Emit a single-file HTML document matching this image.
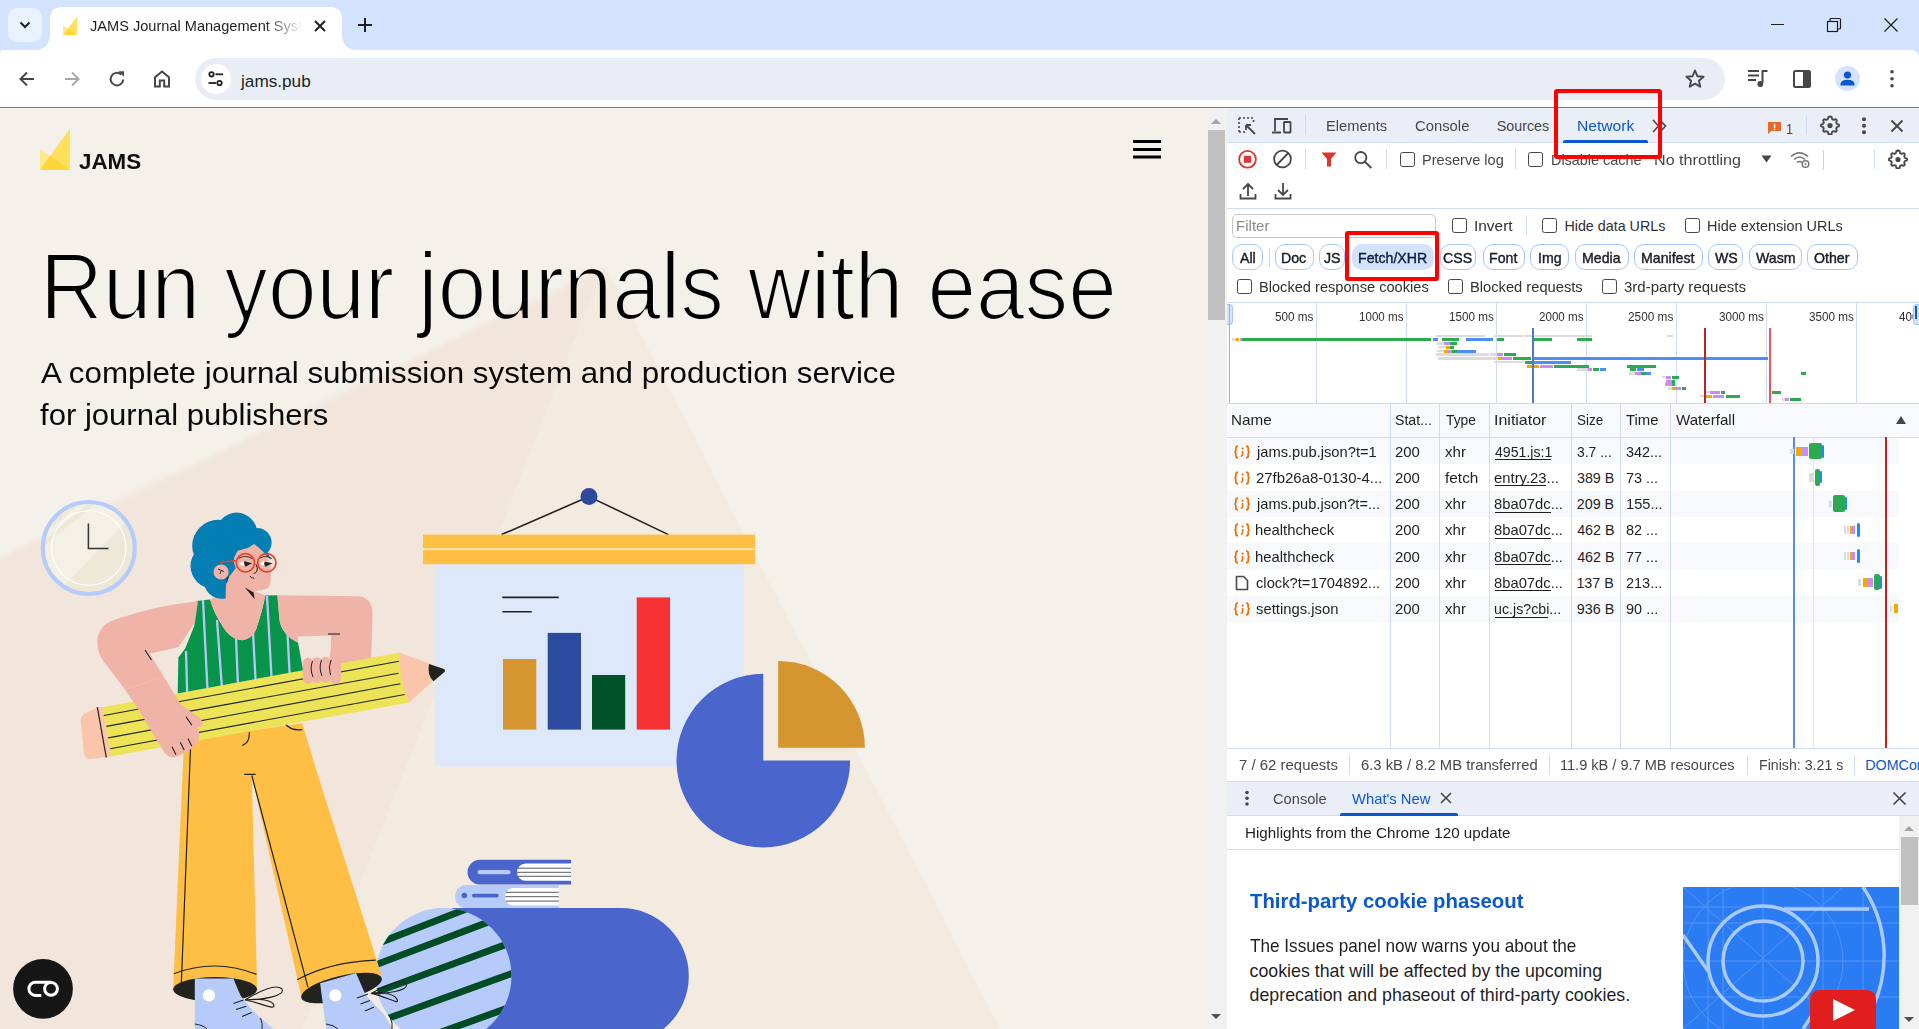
<!DOCTYPE html>
<html><head><meta charset="utf-8">
<style>
*{box-sizing:border-box;margin:0;padding:0}
html,body{width:1919px;height:1029px;overflow:hidden;background:#fff;font-family:"Liberation Sans",sans-serif}
.a{position:absolute}
svg{display:block}
#strip{left:0;top:0;width:1919px;height:60px;background:#D3E3FD}
#toolbar{left:0;top:50px;width:1919px;height:57px;background:#fff;border-top-right-radius:8px}
#tbline{left:0;top:107px;width:1919px;height:1px;background:#7d7d7d}
.tabtxt{font-size:15px;color:#1f1f1f;white-space:nowrap}
#page{left:0;top:108px;width:1206px;height:921px;background:#F4F0EA;overflow:hidden}
#pscroll{left:1206px;top:108px;width:21px;height:921px;background:#F1F1F1}
#dt{left:1227px;top:108px;width:692px;height:921px;background:#fff;overflow:hidden}
.dtt{font-size:15px;color:#474747;white-space:nowrap}
.t15{font-size:15px;color:#1f1f1f;white-space:nowrap}
.redbox{position:absolute;border:4px solid #FF0000;border-radius:3px}
</style></head><body>
<!-- tab strip -->
<div id="strip" class="a"></div>
<div class="a" style="left:8px;top:8px;width:34px;height:34px;border-radius:9px;background:#E9F1FE"></div>
<svg class="a" style="left:17px;top:17px" width="16" height="16" viewBox="0 0 16 16"><path d="M3.5 5.5 L8 10 L12.5 5.5" fill="none" stroke="#1f1f1f" stroke-width="2"/></svg>
<!-- active tab -->
<svg class="a" style="left:34px;top:7px" width="324" height="44" viewBox="0 0 324 44">
<path d="M0 43 Q16 43 16 27 V12 Q16 0 28 0 H296 Q308 0 308 12 V27 Q308 43 324 43 Z" fill="#fff"/>
</svg>
<svg class="a" style="left:62px;top:16px" width="16" height="20" viewBox="0 0 16 20">
<polygon points="1,19 15,0.5 15,19" fill="#FFE05A"/><polygon points="1,9.5 6.2,12.6 1,19" fill="#FFE98A"/><polygon points="6.2,12.6 15,19 1,19" fill="#FFD43A"/>
</svg>

<svg class="a" style="left:312px;top:18px" width="16" height="16" viewBox="0 0 16 16"><path d="M3 3 L13 13 M13 3 L3 13" stroke="#1f1f1f" stroke-width="2"/></svg>
<svg class="a" style="left:356px;top:16px" width="18" height="18" viewBox="0 0 18 18"><path d="M9 2 V16 M2 9 H16" stroke="#1f1f1f" stroke-width="2"/></svg>
<!-- window controls -->
<div class="a" style="left:1771px;top:24px;width:13px;height:1px;background:#1f1f1f"></div>
<svg class="a" style="left:1826px;top:17px" width="16" height="16" viewBox="0 0 16 16"><rect x="1.5" y="4.5" width="10" height="10" fill="none" stroke="#1f1f1f" stroke-width="1.2"/><path d="M4 4.5 V2.5 Q4 1.5 5 1.5 H13.5 Q14.5 1.5 14.5 2.5 V11 Q14.5 12 13.5 12 H11.5" fill="none" stroke="#1f1f1f" stroke-width="1.2"/></svg>
<svg class="a" style="left:1883px;top:17px" width="16" height="16" viewBox="0 0 16 16"><path d="M1.5 1.5 L14.5 14.5 M14.5 1.5 L1.5 14.5" stroke="#1f1f1f" stroke-width="1.2"/></svg>
<!-- toolbar -->
<div id="toolbar" class="a"></div>
<svg class="a" style="left:0;top:43px" width="10" height="10" viewBox="0 0 10 10"><path d="M0 0 V10 Q0 7 3 7 H10 V0 Z" fill="#D3E3FD"/></svg>
<svg class="a" style="left:17px;top:69px" width="20" height="20" viewBox="0 0 20 20"><path d="M17 10 H4 M10 3.5 L3.5 10 L10 16.5" fill="none" stroke="#474747" stroke-width="2"/></svg>
<svg class="a" style="left:62px;top:69px" width="20" height="20" viewBox="0 0 20 20"><path d="M3 10 H16 M10 3.5 L16.5 10 L10 16.5" fill="none" stroke="#A8A8A8" stroke-width="2"/></svg>
<svg class="a" style="left:107px;top:69px" width="20" height="20" viewBox="0 0 20 20"><path d="M16.2 10.5 A6.3 6.3 0 1 1 14.3 5.6" fill="none" stroke="#474747" stroke-width="2"/><path d="M11.5 2.2 H17 V7.7 Z" fill="#474747"/></svg>
<svg class="a" style="left:152px;top:69px" width="20" height="20" viewBox="0 0 20 20"><path d="M3 17.5 V8.3 L10 2.5 L17 8.3 V17.5 H12.2 V11.5 H7.8 V17.5 Z" fill="none" stroke="#474747" stroke-width="2" stroke-linejoin="miter"/></svg>
<div class="a" style="left:195px;top:58px;width:1530px;height:42px;border-radius:21px;background:#E9EEF6"></div>
<div class="a" style="left:200.5px;top:63.5px;width:30px;height:30px;border-radius:15px;background:#fff"></div>
<svg class="a" style="left:207px;top:70px" width="18" height="18" viewBox="0 0 18 18"><circle cx="4.5" cy="4.3" r="2.2" fill="none" stroke="#1f1f1f" stroke-width="1.8"/><path d="M8.5 4.3 H16" stroke="#1f1f1f" stroke-width="1.8"/><circle cx="12.5" cy="13" r="2.2" fill="none" stroke="#1f1f1f" stroke-width="1.8"/><path d="M1.5 13 H9" stroke="#1f1f1f" stroke-width="1.8"/></svg>
<div class="a" style="left:241px;top:70.5px;font-size:17.2px;color:#1f1f1f;white-space:nowrap">jams.pub</div>
<svg class="a" style="left:1684px;top:68px" width="22" height="22" viewBox="0 0 22 22"><path d="M11 2.5 L13.4 8.2 L19.6 8.7 L14.9 12.8 L16.3 18.8 L11 15.6 L5.7 18.8 L7.1 12.8 L2.4 8.7 L8.6 8.2 Z" fill="none" stroke="#474747" stroke-width="1.9" stroke-linejoin="round"/></svg>
<svg class="a" style="left:1747px;top:69px" width="22" height="20" viewBox="0 0 22 20"><path d="M1 2 H12 M1 6.5 H12 M1 11 H9" stroke="#474747" stroke-width="2"/><path d="M15.5 14 V2 H20.5" fill="none" stroke="#474747" stroke-width="2"/><circle cx="13.3" cy="15" r="2.9" fill="#474747"/></svg>
<svg class="a" style="left:1792px;top:69px" width="20" height="20" viewBox="0 0 20 20"><rect x="2" y="2" width="16" height="16" rx="1.5" fill="none" stroke="#474747" stroke-width="2"/><rect x="11" y="2" width="7" height="16" fill="#474747"/></svg>
<div class="a" style="left:1835px;top:66px;width:25px;height:25px;border-radius:13px;background:#D3E3FD"></div>
<svg class="a" style="left:1837px;top:68px" width="21" height="21" viewBox="0 0 21 21"><circle cx="10.5" cy="7" r="3.6" fill="#0B57D0"/><path d="M3.5 16.5 Q3.5 11.8 10.5 11.8 Q17.5 11.8 17.5 16.5 V17.5 H3.5 Z" fill="#0B57D0"/></svg>
<svg class="a" style="left:1886px;top:69px" width="12" height="20" viewBox="0 0 12 20"><circle cx="6" cy="2.7" r="1.8" fill="#474747"/><circle cx="6" cy="9.7" r="1.8" fill="#474747"/><circle cx="6" cy="16.8" r="1.8" fill="#474747"/></svg>
<div id="tbline" class="a"></div>

<!-- PAGE -->
<div id="page" class="a"><svg class="a" style="left:0;top:0" width="1206" height="921" viewBox="0 108 1206 921">
<!-- background triangles -->
<defs><filter id="soft" x="-10%" y="-10%" width="120%" height="120%"><feGaussianBlur stdDeviation="2"/></filter></defs><polygon points="605,267 0,557 -30,571 -30,1060 298,1060" fill="#F2E6DC" filter="url(#soft)"/>
<polygon points="605,265 298,1040 1006,1040" fill="#F3EBE0"/>
<!-- logo -->
<polygon points="39.9,169.9 70,128.4 70,169.9" fill="#FFE05A"/>
<polygon points="39.9,149.2 50,155.8 39.9,169.9" fill="#FFE98A"/>
<polygon points="50,155.8 70,169.9 39.9,169.9" fill="#FFD53C"/>
<!-- hamburger -->
<rect x="1133" y="140" width="28" height="3" fill="#000"/>
<rect x="1133" y="148" width="28" height="3" fill="#000"/>
<rect x="1133" y="155.5" width="28" height="3" fill="#000"/>

<!-- clock -->
<defs><clipPath id="clockclip"><circle cx="88.8" cy="548" r="46"/></clipPath></defs>
<circle cx="88.8" cy="548" r="46" fill="#EDE8D8"/>
<g clip-path="url(#clockclip)"><polygon points="30,558 107,494 137,510 60,590" fill="#F3F0E5"/><polygon points="30,545 100,487 104,490 30,552" fill="#F3F0E5"/></g>
<circle cx="88.8" cy="548" r="46" fill="none" stroke="#B5CBFA" stroke-width="4"/>
<circle cx="88.8" cy="548" r="37.2" fill="none" stroke="#fff" stroke-width="1.1"/>
<path d="M88.4 523.5 V548.4 H108.5" fill="none" stroke="#333" stroke-width="1.5"/>
<!-- presentation board -->
<path d="M589 496.6 L501.6 534.6 M589 496.6 L668.4 534.6" stroke="#222" stroke-width="1.6"/>
<circle cx="589" cy="496.6" r="8.5" fill="#2E4A9E"/>
<rect x="434.7" y="564.2" width="309.3" height="202.3" fill="#DEE8FB"/>
<rect x="422.9" y="534.6" width="332.3" height="29.6" fill="#FFBF45"/>
<rect x="422.9" y="548.5" width="332.3" height="1.2" fill="#fff"/>
<path d="M502.3 597.4 H558.8 M502.3 611.8 H531.8" stroke="#222" stroke-width="1.6"/>
<rect x="503" y="659" width="33.3" height="70.6" fill="#D6962F"/>
<rect x="547.7" y="632.9" width="33.3" height="96.7" fill="#2D4B9E"/>
<rect x="592" y="675" width="33.2" height="54.6" fill="#005228"/>
<rect x="636.7" y="597.4" width="33.3" height="132.2" fill="#F73232"/>
<!-- pie -->
<path d="M763.3 760.6 V673.8 A86.8 86.8 0 1 0 850.1 760.6 Z" fill="#4A65CC"/>
<path d="M778.1 747.7 V660.9 A86.8 86.8 0 0 1 864.9 747.7 Z" fill="#D6962F"/>

<!-- books & ball -->
<path d="M452 908 H620.8 A68 68 0 0 1 620.8 1044 H452 Z" fill="#4A65CC"/>
<defs><clipPath id="ballclip"><circle cx="443.5" cy="976" r="68"/></clipPath></defs>
<circle cx="443.5" cy="976" r="68" fill="#B6CBF9"/>
<g clip-path="url(#ballclip)" stroke="#004D25" stroke-width="6.9">
<path d="M360 950.3 L530 884.2"/><path d="M360 970.8 L530 906.2"/><path d="M360 998.1 L530 935.7"/><path d="M360 1028.6 L530 966.8"/><path d="M360 1061.3 L530 1000"/>
</g>
<path d="M467.5 872.2 A12.4 12.4 0 0 1 479.9 859.8 H571 V884.5 H479.9 A12.4 12.4 0 0 1 467.5 872.2 Z" fill="#4A65CC"/>
<path d="M517 872.2 A8.6 8.6 0 0 1 525.6 863.6 H571 V880.8 H525.6 A8.6 8.6 0 0 1 517 872.2 Z" fill="#fff"/>
<path d="M517.5 868.2 H571 M517 872.3 H571 M517.5 876.3 H571" stroke="#4a4a4a" stroke-width="0.9"/>
<rect x="477.6" y="870" width="33" height="4.3" rx="2.1" fill="#B6CBF9"/>
<path d="M455 896.5 A11.5 11.5 0 0 1 466.5 885 H558.7 V908 H466.5 A11.5 11.5 0 0 1 455 896.5 Z" fill="#B6CBF9"/>
<path d="M505 896.5 A8.5 8.5 0 0 1 513.5 888 H558.7 V905.5 H513.5 A8.5 8.5 0 0 1 505 896.5 Z" fill="#fff"/>
<path d="M506 892.3 H558.7 M505.3 896.7 H558.7 M506 901.1 H558.7" stroke="#4a4a4a" stroke-width="0.9"/>
<circle cx="464.3" cy="895.5" r="2.8" fill="#4A65CC"/>
<rect x="472" y="893.8" width="26.7" height="3.7" rx="1.8" fill="#4A65CC"/>

<!-- PERSON -->
<!-- legs -->
<path d="M184 740 L302.2 723.2 L320 782 L381.8 976 L301.2 996 L251.8 776 L257.1 987 L173.1 989.3 Z" fill="#FFBF45"/>
<ellipse cx="215.1" cy="989.3" rx="42" ry="12.2" fill="#22221E"/>
<ellipse cx="341.5" cy="988" rx="41.5" ry="12.2" fill="#22221E" transform="rotate(-13.5 341.5 988)"/>
<path d="M173.8 973.7 Q215.1 958 256.5 974.4 M297.1 979.8 Q330 962 375.7 960.2" fill="none" stroke="#222" stroke-width="1.2"/>
<path d="M190.5 748.7 L181.4 982 M251.8 775.5 L308 987.3 M244.2 774.3 H255.6 M249.3 732.1 Q250 743 242.2 745.5 M285.6 724.5 Q292 731 302.2 729.6" fill="none" stroke="#222" stroke-width="1.2"/>
<!-- shoes -->
<path d="M194.8 978.5 H233.4 Q238 990 240.9 996 L253.1 1011 L273.4 1029 H194.8 Z" fill="#B6CBF9"/>
<path d="M320.1 983.2 L356 973 L365.5 994.7 L384.5 1015 L392.6 1029 H326.2 Z" fill="#B6CBF9"/>
<circle cx="209" cy="995.4" r="6.1" fill="#fff"/>
<circle cx="335.3" cy="995.4" r="6.1" fill="#fff"/>
<path d="M245 1000 C258 992 276 983 282 989 C286 996 262 1000 245 1000 C258 1002 274 1010 274 1006 C274 1000 258 998 245 1000 M233.4 1003.5 L243.6 1000 M236 1009.6 L246.3 1006.3 M242 1016.4 L251.7 1012.4" fill="none" stroke="#222" stroke-width="1.1"/>
<path d="M371 993.4 C385 986 402 978 406.2 984 C409 991 386 994 371 993.4 C384 996 398 1004 397.4 1001 C397 995 384 991 371 993.4 M357 998 L368 994 M360.5 1004 L370 1000.5 M365 1011 L374 1007" fill="none" stroke="#222" stroke-width="1.1"/>
<path d="M194.8 1024 Q203 1025 207 1029 M260.5 1018 Q263 1024 262 1029 M326 1024 Q334 1025 338 1029 M390 1017 Q393 1023 392 1029" fill="none" stroke="#222" stroke-width="1"/>
<!-- torso green -->
<path d="M196.5 600.9 L210.1 599.4 Q214 613 221.5 624.3 Q230 640 242.6 640.2 Q255 638 257.7 624.3 Q262 612 265.3 595.6 L277.4 595.3 L279.5 620 C281 630 288 638 298 642.5 L303 669.6 L305 705 L177 728 L177.7 692.3 L178.4 657.5 L185.2 648.5 L194.3 625.8 Z" fill="#08944B"/>
<g stroke="#B3C8F7" stroke-width="2.3">
<path d="M203 600 L209 720"/><path d="M186 651 L188 725"/><path d="M217 620 L224 716"/><path d="M236 637 L239 712"/><path d="M253 632 L257 708"/><path d="M267 596 L273 704"/><path d="M287 624 L291 700"/>
</g>
<!-- neck/chest skin -->
<path d="M210.1 599.4 Q214 613 221.5 624.3 Q230 640 242.6 640.2 Q255 638 257.7 624.3 Q262 612 265.3 595.6 L254 591 L226 592 Z" fill="#EFB3A8"/>
<!-- right arm -->
<path d="M277.4 595.3 L359 596.3 C368 597 372.6 604 372.6 614 L371.1 657.5 L369 690 L330 690 L331 635.6 L298 636.4 L298 642.5 C288 638 281 630 279.5 620 L277.4 595.3 Z" fill="#EFB3A8"/>
<path d="M328 634 H340" stroke="#222" stroke-width="1.1"/>
<!-- head -->
<g fill="#047EB3"><circle cx="218.2" cy="545.8" r="26"/><circle cx="236.6" cy="533.2" r="20.6"/><circle cx="257" cy="542.5" r="14.6"/><circle cx="213" cy="566" r="22.5"/><circle cx="222" cy="580.5" r="18.3"/><path d="M222 598.8 L240 580 L262 552 L271 560 L262 540 L235 520 Z"/></g>
<path d="M237.6 550.7 L248.3 547.8 L254.1 543.9 C258 547 262 550 263.9 552.6 C267 557 269.5 561 270.7 565.3 L270.7 580.8 C270 586 268 588.6 266.8 588.6 C263 590.5 260 590.5 258 590.5 L254 592 L256 600 L225.5 600 L226 584.7 L228.9 576.9 L232.8 572 L235.7 568.2 L233.7 561.4 L234.2 557.5 Z" fill="#EFB3A8"/>
<circle cx="221.1" cy="572" r="7.6" fill="#EFB3A8"/>
<path d="M218 569 L224 571.5 M221 571 L220 574" stroke="#222" stroke-width="0.9"/>
<path d="M227 578 L229 576 L226.5 584 Z" fill="#222"/>
<path d="M244.9 587.6 L253.7 592.5 L254.6 599.3 Z" fill="#22221E"/>
<path d="M239 563.8 Q245 558.5 252 563.3 Q245 568 239 563.8 Z M259.5 563.8 Q265.5 558.5 272 563.3 Q265.5 568 259.5 563.8 Z" fill="#fff"/>
<path d="M244.4 560.9 L252.2 563.3 L245.4 566.7 Q243.5 563.8 244.4 560.9 Z M264.8 561.4 L272.6 563.3 L265.3 566.7 Q263.5 564 264.8 561.4 Z" fill="#22221E"/>
<path d="M238.6 558.3 Q245.4 554.5 252.2 558.6 M259.5 558.3 Q265.8 554.5 272 558.6" fill="none" stroke="#222" stroke-width="0.9"/>
<path d="M256 564.3 Q258 568 257 571 Q256 573 253.7 573.5 M249.8 576 Q251.5 578.2 254.1 578.4" fill="none" stroke="#222" stroke-width="1"/>
<circle cx="245.4" cy="562.8" r="9.1" fill="none" stroke="#E8412C" stroke-width="1.7"/>
<circle cx="266.8" cy="562.8" r="9.1" fill="none" stroke="#E8412C" stroke-width="1.7"/>
<path d="M220.1 562.3 L236.3 560.4" stroke="#E8412C" stroke-width="1.5"/>
<!-- pencil -->
<path d="M102.4 707.2 L399.8 652.4 L409.1 702.4 L110.7 756.4 Z" fill="#EDE357"/>
<path d="M97.3 707.2 L102.4 707.2 L110.7 756.4 L91.6 759 C86 760 84 755 83.5 750 L80.7 721 C80 716 84 713 88 712 Z" fill="#FAC5AA"/>
<path d="M97.3 707.2 L106.3 757.7" stroke="#222" stroke-width="1.2"/>
<path d="M103.7 715.5 L399 661.3 M106.3 726.4 L398.5 673.2 M108.2 737.9 L400.3 683.8 M110.1 748.7 L404.7 694.5" stroke="#222" stroke-width="1.1"/>
<path d="M399.8 652.4 L445.4 669.7 L409.1 702.4 Q399 680 399.8 652.4 Z" fill="#FAC5AA"/>
<path d="M429 663.9 L444 669 Q446 670.5 444.5 672 L433.5 681.2 Q427 675 429 663.9 Z" fill="#22221E"/>
<!-- left arm -->
<path d="M196.5 601.6 C175 604 150 608 120 618 C105 622 96 630 97.6 645 C98 652 100 656 104 662 L124.8 689.3 L139.9 712 L164.4 752.6 C168 758 175 759 180 755 L189.9 750 L198.2 741 C200 736 199 730 197.6 727 C199 727 203 727 202.7 723.8 C202 719 198 716 196.3 715.5 L180.7 704.4 L171.6 689.3 L149.7 653.8 L178.4 647 L186 636 L195 622 L198 601.6 Z" fill="#EFB3A8"/>
<path d="M145 650 L151.5 660" stroke="#222" stroke-width="1.1"/>
<path d="M124 690 L160 678" stroke="#F6CFC6" stroke-width="0.6" opacity="0.7"/>
<!-- right hand fingers -->
<rect x="302.8" y="657.7" width="10.2" height="26" rx="5.1" fill="#EFB3A8"/>
<rect x="311.7" y="657.2" width="10.2" height="26" rx="5.1" fill="#EFB3A8"/>
<rect x="320.6" y="656.8" width="10" height="26" rx="5" fill="#EFB3A8"/>
<rect x="329.9" y="650" width="11.1" height="34" rx="5.5" fill="#EFB3A8"/>
<path d="M312.5 661 Q309.5 669 313 677 M321.5 660 Q318.5 668 322 676 M331 660 Q328 667 330.5 675" fill="none" stroke="#222" stroke-width="1"/>
<!-- left hand finger lines -->
<path d="M186 716.8 L191.8 725.1 M188 738.5 L191.8 746.2 M180.3 742.3 L184.2 750 M172 746.8 L175.9 754.5" stroke="#222" stroke-width="1.1"/>

<!-- chat button -->
<circle cx="43" cy="988.8" r="29.9" fill="#161616"/>
<path d="M41.3 995.4 H35.5 A6.6 6.6 0 0 1 35.5 982.2 H51" fill="none" stroke="#fff" stroke-width="3"/>
<circle cx="51" cy="988.8" r="6.4" fill="none" stroke="#fff" stroke-width="3"/>
</svg>
</div>
<div id="pscroll" class="a"></div>
<svg class="a" style="left:1210px;top:117px" width="12" height="8" viewBox="0 0 12 8"><path d="M1 7 L6 2 L11 7 Z" fill="#A3A3A3"/></svg>
<div class="a" style="left:1208px;top:130px;width:17px;height:190px;background:#C1C1C1"></div>
<svg class="a" style="left:1210px;top:1013px" width="12" height="8" viewBox="0 0 12 8"><path d="M1 1 L6 6 L11 1 Z" fill="#505050"/></svg>

<!-- DEVTOOLS -->
<div id="dt" class="a"></div>
<div class="a" style="left:90.08px;top:18.10px;font-size:15px;line-height:15px;color:#1f1f1f;white-space:nowrap;transform:scaleX(0.9715);transform-origin:0 0;width:219.2px;overflow:hidden;padding-bottom:6px;-webkit-mask-image:linear-gradient(90deg,#000 82%,transparent 100%);">JAMS Journal Management System</div>
<div class="a" style="left:78.66px;top:151.28px;font-size:22px;line-height:22px;color:#111;white-space:nowrap;font-weight:bold;transform:scaleX(1.0175);transform-origin:0 0;">JAMS</div>
<svg width="0" height="0" style="position:absolute"><filter id="thin" x="-5%" y="-5%" width="110%" height="110%"><feMorphology operator="erode" radius="1.2"/></filter></svg><div class="a" style="left:40.30px;top:240.43px;font-size:94px;line-height:94px;color:#000;white-space:nowrap;transform:scaleX(0.9282);transform-origin:0 0;filter:url(#thin);">Run your journals with ease</div>
<div class="a" style="left:40.62px;top:358.00px;font-size:29.3px;line-height:29.3px;color:#0a0a0a;white-space:nowrap;transform:scaleX(1.0693);transform-origin:0 0;">A complete journal submission system and production service</div>
<div class="a" style="left:40.23px;top:399.90px;font-size:29.3px;line-height:29.3px;color:#0a0a0a;white-space:nowrap;transform:scaleX(1.0602);transform-origin:0 0;">for journal publishers</div>
<div class="a" style="left:1227px;top:108px;width:692px;height:34px;background:#EAEEF6;"></div>
<div class="a" style="left:1227px;top:142px;width:692px;height:1px;background:#CFDCF3;"></div>
<svg class="a" style="left:1237px;top:116px" width="20" height="20" viewBox="0 0 20 20"><path d="M2 2h2M6 2h2M10 2h2M14 2h2M2 2v2M2 6v2M2 10v2M2 14v2M2 16h2M6 16h2" stroke="#474747" stroke-width="1.6"/><path d="M16.5 4v2" stroke="#474747" stroke-width="1.6"/><path d="M9 9 L18 18 M9 9 H14 M9 9 V14" fill="none" stroke="#474747" stroke-width="1.8"/></svg><svg class="a" style="left:1271px;top:116px" width="22" height="20" viewBox="0 0 22 20"><path d="M4 15 V3 H17" fill="none" stroke="#474747" stroke-width="1.8"/><path d="M1 16.5 H10" stroke="#474747" stroke-width="2"/><rect x="13" y="6" width="6.5" height="10.5" rx="0.5" fill="none" stroke="#474747" stroke-width="1.8"/></svg><div class="a" style="left:1305px;top:115px;width:1px;height:20px;background:#CFDCF3;"></div>
<div class="a" style="left:1326.29px;top:118.80px;font-size:14.3px;line-height:14.3px;color:#474747;white-space:nowrap;transform:scaleX(1.0256);transform-origin:0 0;">Elements</div>
<div class="a" style="left:1415.26px;top:118.80px;font-size:14.3px;line-height:14.3px;color:#474747;white-space:nowrap;transform:scaleX(1.0367);transform-origin:0 0;">Console</div>
<div class="a" style="left:1496.76px;top:118.80px;font-size:14.3px;line-height:14.3px;color:#474747;white-space:nowrap;">Sources</div>
<div class="a" style="left:1576.71px;top:118.80px;font-size:14.3px;line-height:14.3px;color:#0B57D0;white-space:nowrap;transform:scaleX(1.0924);transform-origin:0 0;">Network</div>
<div class="a" style="left:1563px;top:140px;width:85px;height:3px;background:#0B57D0;border-radius:2px 2px 0 0;"></div>
<svg class="a" style="left:1651px;top:118px" width="18" height="16" viewBox="0 0 18 16"><path d="M2 2 L7.5 8 L2 14 M9 2 L14.5 8 L9 14" fill="none" stroke="#474747" stroke-width="1.6"/></svg><svg class="a" style="left:1767px;top:121px" width="15" height="14" viewBox="0 0 15 14"><path d="M1 1.5 Q1 1 1.5 1 H13.5 Q14 1 14 1.5 V10 H4 L1 13 Z" fill="#E8692A"/><rect x="6.8" y="2.8" width="1.6" height="4" fill="#fff"/><rect x="6.8" y="7.6" width="1.6" height="1.5" fill="#fff"/></svg><div class="a" style="left:1786.05px;top:121.30px;font-size:15px;line-height:15px;color:#474747;white-space:nowrap;transform:scaleX(0.8478);transform-origin:0 0;">1</div>
<div class="a" style="left:1806px;top:116px;width:1px;height:19px;background:#CFDCF3;"></div>
<svg class="a" style="left:1819.5px;top:115px" width="20" height="21" viewBox="0 0 20 21"><path d="M10 1.5 L11.6 1.8 L12.1 4.1 L13.6 4.9 L15.8 4.1 L16.9 5.3 L16.2 7.5 L16.9 9 L19 9.7 V11.3 L16.9 12.0 L16.2 13.5 L16.9 15.7 L15.8 16.9 L13.6 16.1 L12.1 16.9 L11.6 19.2 H8.4 L7.9 16.9 L6.4 16.1 L4.2 16.9 L3.1 15.7 L3.8 13.5 L3.1 12 L1 11.3 V9.7 L3.1 9 L3.8 7.5 L3.1 5.3 L4.2 4.1 L6.4 4.9 L7.9 4.1 L8.4 1.8 Z" fill="none" stroke="#474747" stroke-width="1.8" stroke-linejoin="round"/><circle cx="10" cy="10.5" r="2.6" fill="#474747"/></svg><svg class="a" style="left:1858px;top:116px" width="12" height="20" viewBox="0 0 12 20"><circle cx="6" cy="3.3" r="2" fill="#474747"/><circle cx="6" cy="9.8" r="2" fill="#474747"/><circle cx="6" cy="16.3" r="2" fill="#474747"/></svg><svg class="a" style="left:1889px;top:118px" width="16" height="16" viewBox="0 0 16 16"><path d="M2.5 2.5 L13.5 13.5 M13.5 2.5 L2.5 13.5" stroke="#474747" stroke-width="1.8"/></svg><svg class="a" style="left:1237px;top:149px" width="21" height="21" viewBox="0 0 21 21"><circle cx="10.5" cy="10.3" r="8.4" fill="none" stroke="#DC362E" stroke-width="1.8"/><rect x="7" y="6.8" width="7" height="7" fill="#DC362E"/></svg><svg class="a" style="left:1272px;top:149px" width="21" height="21" viewBox="0 0 21 21"><circle cx="10.5" cy="10" r="8.4" fill="none" stroke="#474747" stroke-width="1.8"/><path d="M4.7 16 L16.3 4" stroke="#474747" stroke-width="1.8"/></svg><div class="a" style="left:1305px;top:149px;width:1px;height:20px;background:#CFDCF3;"></div>
<svg class="a" style="left:1320px;top:151px" width="18" height="17" viewBox="0 0 18 17"><path d="M1.5 1.5 H16.5 L11 8 V15.5 H7 V8 Z" fill="#DC362E"/></svg><svg class="a" style="left:1353px;top:150px" width="20" height="19" viewBox="0 0 20 19"><circle cx="7.8" cy="7.6" r="5.6" fill="none" stroke="#474747" stroke-width="1.8"/><path d="M11.8 11.6 L18.3 18" stroke="#474747" stroke-width="2"/></svg><div class="a" style="left:1386px;top:149px;width:1px;height:20px;background:#CFDCF3;"></div>
<div class="a" style="left:1400px;top:152.2px;width:14.5px;height:14.5px;border:1.5px solid #474747;border-radius:2.5px"></div>
<div class="a" style="left:1421.50px;top:152.70px;font-size:14.3px;line-height:14.3px;color:#474747;white-space:nowrap;transform:scaleX(1.0194);transform-origin:0 0;">Preserve log</div>
<div class="a" style="left:1515px;top:149px;width:1px;height:20px;background:#CFDCF3;"></div>
<div class="a" style="left:1528px;top:152.2px;width:14.5px;height:14.5px;border:1.5px solid #474747;border-radius:2.5px"></div>
<div class="a" style="left:1550.81px;top:152.70px;font-size:14.3px;line-height:14.3px;color:#474747;white-space:nowrap;transform:scaleX(1.0066);transform-origin:0 0;">Disable cache</div>
<div class="a" style="left:1654.17px;top:152.70px;font-size:14.3px;line-height:14.3px;color:#474747;white-space:nowrap;transform:scaleX(1.1293);transform-origin:0 0;">No throttling</div>
<svg class="a" style="left:1761px;top:155px" width="11" height="8" viewBox="0 0 11 8"><path d="M0.5 0.5 H10.5 L5.5 7.5 Z" fill="#474747"/></svg><svg class="a" style="left:1789px;top:150px" width="23" height="19" viewBox="0 0 23 19"><path d="M2 6.5 Q10.5 -1 19 6.5 M5 9.5 Q10.5 4.5 16 9.5 M8 12.5 Q10.5 10.5 13 12.5" fill="none" stroke="#777" stroke-width="1.6"/><circle cx="16.5" cy="14" r="3.3" fill="#fff" stroke="#777" stroke-width="1.5"/><circle cx="16.5" cy="14" r="1" fill="#777"/></svg><div class="a" style="left:1822.5px;top:150px;width:1.5px;height:20px;background:#BFD3F5;"></div>
<div class="a" style="left:1874px;top:149px;width:1px;height:20px;background:#CFDCF3;"></div>
<svg class="a" style="left:1887.5px;top:149px" width="20" height="21" viewBox="0 0 20 21"><path d="M10 1.5 L11.6 1.8 L12.1 4.1 L13.6 4.9 L15.8 4.1 L16.9 5.3 L16.2 7.5 L16.9 9 L19 9.7 V11.3 L16.9 12.0 L16.2 13.5 L16.9 15.7 L15.8 16.9 L13.6 16.1 L12.1 16.9 L11.6 19.2 H8.4 L7.9 16.9 L6.4 16.1 L4.2 16.9 L3.1 15.7 L3.8 13.5 L3.1 12 L1 11.3 V9.7 L3.1 9 L3.8 7.5 L3.1 5.3 L4.2 4.1 L6.4 4.9 L7.9 4.1 L8.4 1.8 Z" fill="none" stroke="#474747" stroke-width="1.8" stroke-linejoin="round"/><circle cx="10" cy="10.5" r="2.6" fill="#474747"/></svg><svg class="a" style="left:1238px;top:181px" width="20" height="20" viewBox="0 0 20 20"><path d="M10 15 V3 M5 8 L10 3 L15 8" fill="none" stroke="#474747" stroke-width="1.8"/><path d="M2.5 13 V17.5 H17.5 V13" fill="none" stroke="#474747" stroke-width="1.8"/></svg><svg class="a" style="left:1273px;top:181px" width="20" height="20" viewBox="0 0 20 20"><path d="M10 2 V14 M5 9 L10 14 L15 9" fill="none" stroke="#474747" stroke-width="1.8"/><path d="M2.5 13 V17.5 H17.5 V13" fill="none" stroke="#474747" stroke-width="1.8"/></svg><div class="a" style="left:1227px;top:208px;width:692px;height:1px;background:#CFDCF3;"></div>
<div class="a" style="left:1232px;top:213.5px;width:204px;height:24px;border:1px solid #C4C7CC;border-radius:5px"></div>
<div class="a" style="left:1236.26px;top:218.50px;font-size:14.3px;line-height:14.3px;color:#8A8A8A;white-space:nowrap;transform:scaleX(1.0531);transform-origin:0 0;">Filter</div>
<div class="a" style="left:1452px;top:218.2px;width:14.5px;height:14.5px;border:1.5px solid #474747;border-radius:2.5px"></div>
<div class="a" style="left:1473.57px;top:218.50px;font-size:14.3px;line-height:14.3px;color:#303030;white-space:nowrap;transform:scaleX(1.0781);transform-origin:0 0;">Invert</div>
<div class="a" style="left:1526px;top:215.5px;width:1px;height:19px;background:#CFDCF3;"></div>
<div class="a" style="left:1542px;top:218.2px;width:14.5px;height:14.5px;border:1.5px solid #474747;border-radius:2.5px"></div>
<div class="a" style="left:1564.42px;top:218.50px;font-size:14.3px;line-height:14.3px;color:#303030;white-space:nowrap;">Hide data URLs</div>
<div class="a" style="left:1685px;top:218.2px;width:14.5px;height:14.5px;border:1.5px solid #474747;border-radius:2.5px"></div>
<div class="a" style="left:1706.81px;top:218.50px;font-size:14.3px;line-height:14.3px;color:#303030;white-space:nowrap;transform:scaleX(1.0100);transform-origin:0 0;">Hide extension URLs</div>
<div class="a" style="left:1232px;top:244.4px;width:30.50px;height:25.5px;border-radius:10px;border:1px solid #A8C7FA;"></div>
<div class="a" style="left:1239.84px;top:250.60px;font-size:14.3px;line-height:14.3px;color:#1A1C24;white-space:nowrap;transform:scaleX(0.9900);transform-origin:0 0;-webkit-text-stroke:0.4px #1A1C24;">All</div>
<div class="a" style="left:1275px;top:244.4px;width:38.50px;height:25.5px;border-radius:10px;border:1px solid #A8C7FA;"></div>
<div class="a" style="left:1281.28px;top:250.60px;font-size:14.3px;line-height:14.3px;color:#1A1C24;white-space:nowrap;transform:scaleX(0.9900);transform-origin:0 0;-webkit-text-stroke:0.4px #1A1C24;">Doc</div>
<div class="a" style="left:1319px;top:244.4px;width:26.00px;height:25.5px;border-radius:10px;border:1px solid #A8C7FA;"></div>
<div class="a" style="left:1323.95px;top:250.60px;font-size:14.3px;line-height:14.3px;color:#1A1C24;white-space:nowrap;transform:scaleX(0.9900);transform-origin:0 0;-webkit-text-stroke:0.4px #1A1C24;">JS</div>
<div class="a" style="left:1352px;top:244.4px;width:81.50px;height:25.5px;border-radius:10px;background:#D3E3FD;"></div>
<div class="a" style="left:1357.89px;top:250.60px;font-size:14.3px;line-height:14.3px;color:#0A1F44;white-space:nowrap;transform:scaleX(0.9900);transform-origin:0 0;-webkit-text-stroke:0.4px #0A1F44;">Fetch/XHR</div>
<div class="a" style="left:1439.75px;top:244.4px;width:36.25px;height:25.5px;border-radius:10px;border:1px solid #A8C7FA;"></div>
<div class="a" style="left:1443.28px;top:250.60px;font-size:14.3px;line-height:14.3px;color:#1A1C24;white-space:nowrap;transform:scaleX(0.9900);transform-origin:0 0;-webkit-text-stroke:0.4px #1A1C24;">CSS</div>
<div class="a" style="left:1482.5px;top:244.4px;width:42.00px;height:25.5px;border-radius:10px;border:1px solid #A8C7FA;"></div>
<div class="a" style="left:1488.81px;top:250.60px;font-size:14.3px;line-height:14.3px;color:#1A1C24;white-space:nowrap;transform:scaleX(0.9900);transform-origin:0 0;-webkit-text-stroke:0.4px #1A1C24;">Font</div>
<div class="a" style="left:1530px;top:244.4px;width:39.40px;height:25.5px;border-radius:10px;border:1px solid #A8C7FA;"></div>
<div class="a" style="left:1537.70px;top:250.60px;font-size:14.3px;line-height:14.3px;color:#1A1C24;white-space:nowrap;transform:scaleX(0.9900);transform-origin:0 0;-webkit-text-stroke:0.4px #1A1C24;">Img</div>
<div class="a" style="left:1575px;top:244.4px;width:53.50px;height:25.5px;border-radius:10px;border:1px solid #A8C7FA;"></div>
<div class="a" style="left:1581.88px;top:250.60px;font-size:14.3px;line-height:14.3px;color:#1A1C24;white-space:nowrap;transform:scaleX(0.9900);transform-origin:0 0;-webkit-text-stroke:0.4px #1A1C24;">Media</div>
<div class="a" style="left:1634.4px;top:244.4px;width:68.35px;height:25.5px;border-radius:10px;border:1px solid #A8C7FA;"></div>
<div class="a" style="left:1641.29px;top:250.60px;font-size:14.3px;line-height:14.3px;color:#1A1C24;white-space:nowrap;transform:scaleX(0.9900);transform-origin:0 0;-webkit-text-stroke:0.4px #1A1C24;">Manifest</div>
<div class="a" style="left:1708.4px;top:244.4px;width:35.00px;height:25.5px;border-radius:10px;border:1px solid #A8C7FA;"></div>
<div class="a" style="left:1714.77px;top:250.60px;font-size:14.3px;line-height:14.3px;color:#1A1C24;white-space:nowrap;transform:scaleX(0.9900);transform-origin:0 0;-webkit-text-stroke:0.4px #1A1C24;">WS</div>
<div class="a" style="left:1749px;top:244.4px;width:52.50px;height:25.5px;border-radius:10px;border:1px solid #A8C7FA;"></div>
<div class="a" style="left:1755.89px;top:250.60px;font-size:14.3px;line-height:14.3px;color:#1A1C24;white-space:nowrap;transform:scaleX(0.9900);transform-origin:0 0;-webkit-text-stroke:0.4px #1A1C24;">Wasm</div>
<div class="a" style="left:1807px;top:244.4px;width:50.50px;height:25.5px;border-radius:10px;border:1px solid #A8C7FA;"></div>
<div class="a" style="left:1814.32px;top:250.60px;font-size:14.3px;line-height:14.3px;color:#1A1C24;white-space:nowrap;transform:scaleX(0.9900);transform-origin:0 0;-webkit-text-stroke:0.4px #1A1C24;">Other</div>
<div class="a" style="left:1268.5px;top:247.5px;width:1.2px;height:19px;background:#C7D8F5;"></div>
<div class="a" style="left:1237px;top:279.4px;width:14.5px;height:14.5px;border:1.5px solid #474747;border-radius:2.5px"></div>
<div class="a" style="left:1259.39px;top:279.50px;font-size:14.3px;line-height:14.3px;color:#303030;white-space:nowrap;transform:scaleX(1.0216);transform-origin:0 0;">Blocked response cookies</div>
<div class="a" style="left:1448px;top:279.4px;width:14.5px;height:14.5px;border:1.5px solid #474747;border-radius:2.5px"></div>
<div class="a" style="left:1469.79px;top:279.50px;font-size:14.3px;line-height:14.3px;color:#303030;white-space:nowrap;transform:scaleX(1.0278);transform-origin:0 0;">Blocked requests</div>
<div class="a" style="left:1602px;top:279.4px;width:14.5px;height:14.5px;border:1.5px solid #474747;border-radius:2.5px"></div>
<div class="a" style="left:1624.19px;top:279.50px;font-size:14.3px;line-height:14.3px;color:#303030;white-space:nowrap;transform:scaleX(1.0521);transform-origin:0 0;">3rd-party requests</div>
<div class="a" style="left:1227px;top:302px;width:692px;height:1px;background:#CFDCF3;"></div>
<div class="a" style="left:1315.9px;top:303px;width:1px;height:100px;background:#CFDCF3;"></div>
<div class="a" style="left:1405.9px;top:303px;width:1px;height:100px;background:#CFDCF3;"></div>
<div class="a" style="left:1495.9px;top:303px;width:1px;height:100px;background:#CFDCF3;"></div>
<div class="a" style="left:1585.9px;top:303px;width:1px;height:100px;background:#CFDCF3;"></div>
<div class="a" style="left:1675.9px;top:303px;width:1px;height:100px;background:#CFDCF3;"></div>
<div class="a" style="left:1765.9px;top:303px;width:1px;height:100px;background:#CFDCF3;"></div>
<div class="a" style="left:1855.9px;top:303px;width:1px;height:100px;background:#CFDCF3;"></div>
<div class="a" style="left:1275.23px;top:311.16px;font-size:12.8px;line-height:12.8px;color:#303030;white-space:nowrap;transform:scaleX(0.9141);transform-origin:0 0;">500 ms</div>
<div class="a" style="left:1358.93px;top:311.16px;font-size:12.8px;line-height:12.8px;color:#303030;white-space:nowrap;transform:scaleX(0.9060);transform-origin:0 0;">1000 ms</div>
<div class="a" style="left:1448.62px;top:311.16px;font-size:12.8px;line-height:12.8px;color:#303030;white-space:nowrap;transform:scaleX(0.9123);transform-origin:0 0;">1500 ms</div>
<div class="a" style="left:1538.92px;top:311.16px;font-size:12.8px;line-height:12.8px;color:#303030;white-space:nowrap;transform:scaleX(0.9062);transform-origin:0 0;">2000 ms</div>
<div class="a" style="left:1628.41px;top:311.16px;font-size:12.8px;line-height:12.8px;color:#303030;white-space:nowrap;transform:scaleX(0.9229);transform-origin:0 0;">2500 ms</div>
<div class="a" style="left:1718.56px;top:311.16px;font-size:12.8px;line-height:12.8px;color:#303030;white-space:nowrap;transform:scaleX(0.9136);transform-origin:0 0;">3000 ms</div>
<div class="a" style="left:1808.56px;top:311.16px;font-size:12.8px;line-height:12.8px;color:#303030;white-space:nowrap;transform:scaleX(0.9136);transform-origin:0 0;">3500 ms</div>
<div class="a" style="left:1898.74px;top:311.16px;font-size:12.8px;line-height:12.8px;color:#303030;white-space:nowrap;transform:scaleX(0.9100);transform-origin:0 0;">4000 ms</div>
<div class="a" style="left:1227px;top:304px;width:6px;height:21px;background:#D3E3FD;border-radius:0 4px 4px 0;border:1px solid #A8C7FA;border-left:none"></div>
<div class="a" style="left:1228.5px;top:306px;width:1.5px;height:13px;background:#0B57D0;"></div>
<div class="a" style="left:1228.5px;top:304px;width:1.8px;height:99px;background:#8AB4F8;"></div>
<div class="a" style="left:1913px;top:304px;width:6px;height:21px;background:#D3E3FD;border-radius:4px 0 0 4px;border:1px solid #A8C7FA;border-right:none"></div>
<div class="a" style="left:1915px;top:306px;width:1.5px;height:13px;background:#0B57D0;"></div>
<div class="a" style="left:1435.6px;top:334.5px;width:49.4px;height:2.5px;background:#DCDCDC;"></div>
<div class="a" style="left:1494px;top:334.5px;width:30px;height:2.5px;background:#DCDCDC;"></div>
<div class="a" style="left:1525px;top:334.5px;width:67px;height:2.5px;background:#DCDCDC;"></div>
<div class="a" style="left:1667px;top:334.5px;width:6px;height:2.5px;background:#DCDCDC;"></div>
<div class="a" style="left:1232px;top:338.0px;width:4px;height:2.5px;background:#DCDCDC;"></div>
<div class="a" style="left:1236px;top:338.0px;width:3px;height:3px;background:#F2A900;"></div>
<div class="a" style="left:1239.5px;top:338.0px;width:2.5px;height:3px;background:#C98BF5;"></div>
<div class="a" style="left:1242.3px;top:338.0px;width:188.7px;height:3px;background:#2DA94F;"></div>
<div class="a" style="left:1433px;top:338.0px;width:5.4px;height:3px;background:#4D8EF5;"></div>
<div class="a" style="left:1442px;top:338.0px;width:17.4px;height:3px;background:#2DA94F;"></div>
<div class="a" style="left:1465.7px;top:338.0px;width:27.3px;height:3px;background:#4D8EF5;"></div>
<div class="a" style="left:1496.7px;top:338.0px;width:7.3px;height:3px;background:#2DA94F;"></div>
<div class="a" style="left:1533px;top:338.0px;width:18.5px;height:3px;background:#2DA94F;"></div>
<div class="a" style="left:1577px;top:338.0px;width:15px;height:3px;background:#2DA94F;"></div>
<div class="a" style="left:1437px;top:342.0px;width:7px;height:2.5px;background:#DCDCDC;"></div>
<div class="a" style="left:1444px;top:342.0px;width:6px;height:3px;background:#C98BF5;"></div>
<div class="a" style="left:1450px;top:342.0px;width:6.6px;height:3px;background:#2DA94F;"></div>
<div class="a" style="left:1438px;top:345.8px;width:8px;height:2.5px;background:#DCDCDC;"></div>
<div class="a" style="left:1446px;top:345.8px;width:4px;height:3px;background:#F2A900;"></div>
<div class="a" style="left:1450px;top:345.8px;width:4px;height:3px;background:#2DA94F;"></div>
<div class="a" style="left:1436.6px;top:349.5px;width:7.4px;height:2.5px;background:#DCDCDC;"></div>
<div class="a" style="left:1444px;top:349.5px;width:4px;height:3px;background:#F2A900;"></div>
<div class="a" style="left:1448px;top:349.5px;width:4px;height:3px;background:#C98BF5;"></div>
<div class="a" style="left:1452px;top:349.5px;width:4.6px;height:3px;background:#2DA94F;"></div>
<div class="a" style="left:1456.6px;top:349.5px;width:19.2px;height:3px;background:#4D8EF5;"></div>
<div class="a" style="left:1435.6px;top:353.3px;width:53.9px;height:2.5px;background:#DCDCDC;"></div>
<div class="a" style="left:1490px;top:353.3px;width:7px;height:2.5px;background:#DCDCDC;"></div>
<div class="a" style="left:1497px;top:353.3px;width:6px;height:3px;background:#C98BF5;"></div>
<div class="a" style="left:1504px;top:353.3px;width:12px;height:3px;background:#2DA94F;"></div>
<div class="a" style="left:1437.5px;top:357.0px;width:52.0px;height:2.5px;background:#DCDCDC;"></div>
<div class="a" style="left:1490px;top:357.0px;width:7.7px;height:2.5px;background:#DCDCDC;"></div>
<div class="a" style="left:1497.7px;top:357.0px;width:4.3px;height:3px;background:#F2A900;"></div>
<div class="a" style="left:1502px;top:357.0px;width:10px;height:3px;background:#C98BF5;"></div>
<div class="a" style="left:1513px;top:357.0px;width:18.4px;height:3px;background:#2DA94F;"></div>
<div class="a" style="left:1533px;top:357.0px;width:235px;height:3px;background:#4D8EF5;"></div>
<div class="a" style="left:1494px;top:360.8px;width:30px;height:2.5px;background:#DCDCDC;"></div>
<div class="a" style="left:1525px;top:360.8px;width:8px;height:3px;background:#2DA94F;"></div>
<div class="a" style="left:1533px;top:360.8px;width:37.6px;height:3px;background:#4D8EF5;"></div>
<div class="a" style="left:1527px;top:364.5px;width:12px;height:3px;background:#F2A900;"></div>
<div class="a" style="left:1540px;top:364.5px;width:13px;height:3px;background:#C98BF5;"></div>
<div class="a" style="left:1554px;top:364.5px;width:35px;height:3px;background:#2DA94F;"></div>
<div class="a" style="left:1627px;top:364.5px;width:28.5px;height:3px;background:#2DA94F;"></div>
<div class="a" style="left:1577px;top:368.0px;width:11px;height:2.5px;background:#DCDCDC;"></div>
<div class="a" style="left:1588px;top:368.0px;width:4px;height:3px;background:#C98BF5;"></div>
<div class="a" style="left:1593px;top:368.0px;width:6px;height:3px;background:#2DA94F;"></div>
<div class="a" style="left:1600px;top:368.0px;width:5.5px;height:3px;background:#4D8EF5;"></div>
<div class="a" style="left:1630px;top:368.0px;width:6px;height:3px;background:#2DA94F;"></div>
<div class="a" style="left:1637px;top:368.0px;width:6.6px;height:3px;background:#4D8EF5;"></div>
<div class="a" style="left:1629px;top:372.0px;width:6px;height:2.5px;background:#DCDCDC;"></div>
<div class="a" style="left:1635px;top:372.0px;width:6px;height:3px;background:#C98BF5;"></div>
<div class="a" style="left:1641px;top:372.0px;width:5px;height:3px;background:#2DA94F;"></div>
<div class="a" style="left:1646px;top:372.0px;width:5px;height:3px;background:#4D8EF5;"></div>
<div class="a" style="left:1801px;top:372.0px;width:5px;height:3px;background:#2DA94F;"></div>
<div class="a" style="left:1662px;top:375.5px;width:3.5px;height:2.5px;background:#DCDCDC;"></div>
<div class="a" style="left:1665.5px;top:375.5px;width:5.5px;height:3px;background:#C98BF5;"></div>
<div class="a" style="left:1672px;top:375.5px;width:7px;height:3px;background:#2DA94F;"></div>
<div class="a" style="left:1666px;top:379.5px;width:6px;height:3px;background:#C98BF5;"></div>
<div class="a" style="left:1672px;top:379.5px;width:2.5px;height:3px;background:#2DA94F;"></div>
<div class="a" style="left:1665px;top:383.0px;width:7px;height:3px;background:#C98BF5;"></div>
<div class="a" style="left:1672px;top:383.0px;width:2.5px;height:3px;background:#2DA94F;"></div>
<div class="a" style="left:1668px;top:387.1px;width:4px;height:2.5px;background:#DCDCDC;"></div>
<div class="a" style="left:1672px;top:387.1px;width:3px;height:3px;background:#F2A900;"></div>
<div class="a" style="left:1675px;top:387.1px;width:6px;height:3px;background:#C98BF5;"></div>
<div class="a" style="left:1682px;top:387.1px;width:4px;height:3px;background:#2DA94F;"></div>
<div class="a" style="left:1706px;top:390.8px;width:4px;height:2.5px;background:#DCDCDC;"></div>
<div class="a" style="left:1710px;top:390.8px;width:10px;height:3px;background:#C98BF5;"></div>
<div class="a" style="left:1721px;top:390.8px;width:3.5px;height:3px;background:#2DA94F;"></div>
<div class="a" style="left:1772px;top:390.8px;width:9px;height:3px;background:#2DA94F;"></div>
<div class="a" style="left:1700px;top:394.5px;width:5.5px;height:2.5px;background:#DCDCDC;"></div>
<div class="a" style="left:1705.5px;top:394.5px;width:6.5px;height:3px;background:#F2A900;"></div>
<div class="a" style="left:1713px;top:394.5px;width:10.6px;height:3px;background:#C98BF5;"></div>
<div class="a" style="left:1725.5px;top:394.5px;width:14.5px;height:3px;background:#2DA94F;"></div>
<div class="a" style="left:1782px;top:398.0px;width:3px;height:2.5px;background:#DCDCDC;"></div>
<div class="a" style="left:1785px;top:398.0px;width:4px;height:3px;background:#C98BF5;"></div>
<div class="a" style="left:1790px;top:398.0px;width:11px;height:3px;background:#2DA94F;"></div>
<div class="a" style="left:1532px;top:328px;width:2px;height:75px;background:#4F78CC;"></div>
<div class="a" style="left:1703.5px;top:328px;width:2px;height:75px;background:#B3262E;"></div>
<div class="a" style="left:1768.5px;top:328px;width:2px;height:75px;background:#E9545A;"></div>
<div class="a" style="left:1227px;top:403px;width:692px;height:1px;background:#CFDCF3;"></div>
<div class="a" style="left:1227px;top:404px;width:692px;height:33.5px;background:#F7F9FC;"></div>
<div class="a" style="left:1227px;top:437px;width:692px;height:1px;background:#CFDCF3;"></div>
<div class="a" style="left:1231.34px;top:413.30px;font-size:14.3px;line-height:14.3px;color:#1F1F1F;white-space:nowrap;transform:scaleX(1.0672);transform-origin:0 0;">Name</div>
<div class="a" style="left:1395.36px;top:413.30px;font-size:14.3px;line-height:14.3px;color:#1F1F1F;white-space:nowrap;transform:scaleX(0.9879);transform-origin:0 0;">Stat...</div>
<div class="a" style="left:1445.89px;top:413.30px;font-size:14.3px;line-height:14.3px;color:#1F1F1F;white-space:nowrap;transform:scaleX(0.9646);transform-origin:0 0;">Type</div>
<div class="a" style="left:1493.82px;top:413.30px;font-size:14.3px;line-height:14.3px;color:#1F1F1F;white-space:nowrap;transform:scaleX(1.1176);transform-origin:0 0;">Initiator</div>
<div class="a" style="left:1576.69px;top:413.30px;font-size:14.3px;line-height:14.3px;color:#1F1F1F;white-space:nowrap;transform:scaleX(0.9412);transform-origin:0 0;">Size</div>
<div class="a" style="left:1626.37px;top:413.30px;font-size:14.3px;line-height:14.3px;color:#1F1F1F;white-space:nowrap;transform:scaleX(1.0391);transform-origin:0 0;">Time</div>
<div class="a" style="left:1676.32px;top:413.30px;font-size:14.3px;line-height:14.3px;color:#1F1F1F;white-space:nowrap;transform:scaleX(1.0576);transform-origin:0 0;">Waterfall</div>
<svg class="a" style="left:1895px;top:415px" width="12" height="10" viewBox="0 0 12 10"><path d="M1 9 H11 L6 1 Z" fill="#474747"/></svg><div class="a" style="left:1227px;top:438.0px;width:672px;height:26.25px;background:#F7F9FC;"></div>
<svg class="a" style="left:1233px;top:444.50px" width="18" height="14" viewBox="0 0 18 14"><path d="M5 1.2 Q2.8 1.2 2.8 3.2 V5.5 Q2.8 7 1.2 7 Q2.8 7 2.8 8.5 V10.8 Q2.8 12.8 5 12.8 M13 1.2 Q15.2 1.2 15.2 3.2 V5.5 Q15.2 7 16.8 7 Q15.2 7 15.2 8.5 V10.8 Q15.2 12.8 13 12.8" fill="none" stroke="#E8710A" stroke-width="1.7"/><circle cx="9.6" cy="3.6" r="1.1" fill="#E8710A"/><path d="M9.6 6 V9 Q9.6 11 7.8 11.5" fill="none" stroke="#E8710A" stroke-width="1.6"/></svg><div class="a" style="left:1256.67px;top:444.70px;font-size:14.3px;line-height:14.3px;color:#1f1f1f;white-space:nowrap;transform:scaleX(1.0283);transform-origin:0 0;">jams.pub.json?t=1</div>
<div class="a" style="left:1395.25px;top:444.70px;font-size:14.3px;line-height:14.3px;color:#1f1f1f;white-space:nowrap;transform:scaleX(1.0445);transform-origin:0 0;">200</div>
<div class="a" style="left:1445.31px;top:444.70px;font-size:14.3px;line-height:14.3px;color:#1f1f1f;white-space:nowrap;transform:scaleX(1.0541);transform-origin:0 0;">xhr</div>
<div class="a" style="left:1494.68px;top:444.70px;font-size:14.3px;line-height:14.3px;color:#1f1f1f;white-space:nowrap;transform:scaleX(0.9874);transform-origin:0 0;">4951.js:1</div>
<div class="a" style="left:1495px;top:459.0px;width:56.3px;height:1px;background:#1F1F1F;"></div>
<div class="a" style="left:1576.98px;top:444.70px;font-size:14.3px;line-height:14.3px;color:#1f1f1f;white-space:nowrap;transform:scaleX(0.9717);transform-origin:0 0;">3.7 ...</div>
<div class="a" style="left:1626.26px;top:444.70px;font-size:14.3px;line-height:14.3px;color:#1f1f1f;white-space:nowrap;transform:scaleX(1.0070);transform-origin:0 0;">342...</div>
<svg class="a" style="left:1233px;top:470.75px" width="18" height="14" viewBox="0 0 18 14"><path d="M5 1.2 Q2.8 1.2 2.8 3.2 V5.5 Q2.8 7 1.2 7 Q2.8 7 2.8 8.5 V10.8 Q2.8 12.8 5 12.8 M13 1.2 Q15.2 1.2 15.2 3.2 V5.5 Q15.2 7 16.8 7 Q15.2 7 15.2 8.5 V10.8 Q15.2 12.8 13 12.8" fill="none" stroke="#E8710A" stroke-width="1.7"/><circle cx="9.6" cy="3.6" r="1.1" fill="#E8710A"/><path d="M9.6 6 V9 Q9.6 11 7.8 11.5" fill="none" stroke="#E8710A" stroke-width="1.6"/></svg><div class="a" style="left:1255.55px;top:470.95px;font-size:14.3px;line-height:14.3px;color:#1f1f1f;white-space:nowrap;transform:scaleX(1.0443);transform-origin:0 0;">27fb26a8-0130-4...</div>
<div class="a" style="left:1395.25px;top:470.95px;font-size:14.3px;line-height:14.3px;color:#1f1f1f;white-space:nowrap;transform:scaleX(1.0445);transform-origin:0 0;">200</div>
<div class="a" style="left:1445.27px;top:470.95px;font-size:14.3px;line-height:14.3px;color:#1f1f1f;white-space:nowrap;transform:scaleX(1.0774);transform-origin:0 0;">fetch</div>
<div class="a" style="left:1494.37px;top:470.95px;font-size:14.3px;line-height:14.3px;color:#1f1f1f;white-space:nowrap;transform:scaleX(1.0391);transform-origin:0 0;">entry.23...</div>
<div class="a" style="left:1495px;top:485.25px;width:51.3px;height:1px;background:#1F1F1F;"></div>
<div class="a" style="left:1576.97px;top:470.95px;font-size:14.3px;line-height:14.3px;color:#1f1f1f;white-space:nowrap;">389 B</div>
<div class="a" style="left:1626.08px;top:470.95px;font-size:14.3px;line-height:14.3px;color:#1f1f1f;white-space:nowrap;transform:scaleX(1.0074);transform-origin:0 0;">73 ...</div>
<div class="a" style="left:1227px;top:490.5px;width:672px;height:26.25px;background:#F7F9FC;"></div>
<svg class="a" style="left:1233px;top:497.00px" width="18" height="14" viewBox="0 0 18 14"><path d="M5 1.2 Q2.8 1.2 2.8 3.2 V5.5 Q2.8 7 1.2 7 Q2.8 7 2.8 8.5 V10.8 Q2.8 12.8 5 12.8 M13 1.2 Q15.2 1.2 15.2 3.2 V5.5 Q15.2 7 16.8 7 Q15.2 7 15.2 8.5 V10.8 Q15.2 12.8 13 12.8" fill="none" stroke="#E8710A" stroke-width="1.7"/><circle cx="9.6" cy="3.6" r="1.1" fill="#E8710A"/><path d="M9.6 6 V9 Q9.6 11 7.8 11.5" fill="none" stroke="#E8710A" stroke-width="1.6"/></svg><div class="a" style="left:1256.67px;top:497.20px;font-size:14.3px;line-height:14.3px;color:#1f1f1f;white-space:nowrap;transform:scaleX(1.0225);transform-origin:0 0;">jams.pub.json?t=...</div>
<div class="a" style="left:1395.25px;top:497.20px;font-size:14.3px;line-height:14.3px;color:#1f1f1f;white-space:nowrap;transform:scaleX(1.0445);transform-origin:0 0;">200</div>
<div class="a" style="left:1445.31px;top:497.20px;font-size:14.3px;line-height:14.3px;color:#1f1f1f;white-space:nowrap;transform:scaleX(1.0541);transform-origin:0 0;">xhr</div>
<div class="a" style="left:1494.37px;top:497.20px;font-size:14.3px;line-height:14.3px;color:#1f1f1f;white-space:nowrap;transform:scaleX(1.0326);transform-origin:0 0;">8ba07dc...</div>
<div class="a" style="left:1495px;top:511.5px;width:55.6px;height:1px;background:#1F1F1F;"></div>
<div class="a" style="left:1576.78px;top:497.20px;font-size:14.3px;line-height:14.3px;color:#1f1f1f;white-space:nowrap;">209 B</div>
<div class="a" style="left:1625.70px;top:497.20px;font-size:14.3px;line-height:14.3px;color:#1f1f1f;white-space:nowrap;transform:scaleX(1.0231);transform-origin:0 0;">155...</div>
<svg class="a" style="left:1233px;top:523.25px" width="18" height="14" viewBox="0 0 18 14"><path d="M5 1.2 Q2.8 1.2 2.8 3.2 V5.5 Q2.8 7 1.2 7 Q2.8 7 2.8 8.5 V10.8 Q2.8 12.8 5 12.8 M13 1.2 Q15.2 1.2 15.2 3.2 V5.5 Q15.2 7 16.8 7 Q15.2 7 15.2 8.5 V10.8 Q15.2 12.8 13 12.8" fill="none" stroke="#E8710A" stroke-width="1.7"/><circle cx="9.6" cy="3.6" r="1.1" fill="#E8710A"/><path d="M9.6 6 V9 Q9.6 11 7.8 11.5" fill="none" stroke="#E8710A" stroke-width="1.6"/></svg><div class="a" style="left:1255.26px;top:523.45px;font-size:14.3px;line-height:14.3px;color:#1f1f1f;white-space:nowrap;transform:scaleX(1.0382);transform-origin:0 0;">healthcheck</div>
<div class="a" style="left:1395.25px;top:523.45px;font-size:14.3px;line-height:14.3px;color:#1f1f1f;white-space:nowrap;transform:scaleX(1.0445);transform-origin:0 0;">200</div>
<div class="a" style="left:1445.31px;top:523.45px;font-size:14.3px;line-height:14.3px;color:#1f1f1f;white-space:nowrap;transform:scaleX(1.0541);transform-origin:0 0;">xhr</div>
<div class="a" style="left:1494.37px;top:523.45px;font-size:14.3px;line-height:14.3px;color:#1f1f1f;white-space:nowrap;transform:scaleX(1.0326);transform-origin:0 0;">8ba07dc...</div>
<div class="a" style="left:1495px;top:537.75px;width:55.6px;height:1px;background:#1F1F1F;"></div>
<div class="a" style="left:1577.18px;top:523.45px;font-size:14.3px;line-height:14.3px;color:#1f1f1f;white-space:nowrap;">462 B</div>
<div class="a" style="left:1626.19px;top:523.45px;font-size:14.3px;line-height:14.3px;color:#1f1f1f;white-space:nowrap;transform:scaleX(1.0105);transform-origin:0 0;">82 ...</div>
<div class="a" style="left:1227px;top:543.0px;width:672px;height:26.25px;background:#F7F9FC;"></div>
<svg class="a" style="left:1233px;top:549.50px" width="18" height="14" viewBox="0 0 18 14"><path d="M5 1.2 Q2.8 1.2 2.8 3.2 V5.5 Q2.8 7 1.2 7 Q2.8 7 2.8 8.5 V10.8 Q2.8 12.8 5 12.8 M13 1.2 Q15.2 1.2 15.2 3.2 V5.5 Q15.2 7 16.8 7 Q15.2 7 15.2 8.5 V10.8 Q15.2 12.8 13 12.8" fill="none" stroke="#E8710A" stroke-width="1.7"/><circle cx="9.6" cy="3.6" r="1.1" fill="#E8710A"/><path d="M9.6 6 V9 Q9.6 11 7.8 11.5" fill="none" stroke="#E8710A" stroke-width="1.6"/></svg><div class="a" style="left:1255.26px;top:549.70px;font-size:14.3px;line-height:14.3px;color:#1f1f1f;white-space:nowrap;transform:scaleX(1.0382);transform-origin:0 0;">healthcheck</div>
<div class="a" style="left:1395.25px;top:549.70px;font-size:14.3px;line-height:14.3px;color:#1f1f1f;white-space:nowrap;transform:scaleX(1.0445);transform-origin:0 0;">200</div>
<div class="a" style="left:1445.31px;top:549.70px;font-size:14.3px;line-height:14.3px;color:#1f1f1f;white-space:nowrap;transform:scaleX(1.0541);transform-origin:0 0;">xhr</div>
<div class="a" style="left:1494.37px;top:549.70px;font-size:14.3px;line-height:14.3px;color:#1f1f1f;white-space:nowrap;transform:scaleX(1.0326);transform-origin:0 0;">8ba07dc...</div>
<div class="a" style="left:1495px;top:564.0px;width:55.6px;height:1px;background:#1F1F1F;"></div>
<div class="a" style="left:1577.18px;top:549.70px;font-size:14.3px;line-height:14.3px;color:#1f1f1f;white-space:nowrap;">462 B</div>
<div class="a" style="left:1626.08px;top:549.70px;font-size:14.3px;line-height:14.3px;color:#1f1f1f;white-space:nowrap;transform:scaleX(1.0074);transform-origin:0 0;">77 ...</div>
<svg class="a" style="left:1234px;top:574.75px" width="16" height="16" viewBox="0 0 16 16"><path d="M2.5 1.5 H9.5 L13.5 5.5 V14.5 H2.5 Z" fill="none" stroke="#474747" stroke-width="1.6" stroke-linejoin="round"/></svg><div class="a" style="left:1255.67px;top:575.95px;font-size:14.3px;line-height:14.3px;color:#1f1f1f;white-space:nowrap;transform:scaleX(1.0308);transform-origin:0 0;">clock?t=1704892...</div>
<div class="a" style="left:1395.25px;top:575.95px;font-size:14.3px;line-height:14.3px;color:#1f1f1f;white-space:nowrap;transform:scaleX(1.0445);transform-origin:0 0;">200</div>
<div class="a" style="left:1445.31px;top:575.95px;font-size:14.3px;line-height:14.3px;color:#1f1f1f;white-space:nowrap;transform:scaleX(1.0541);transform-origin:0 0;">xhr</div>
<div class="a" style="left:1494.37px;top:575.95px;font-size:14.3px;line-height:14.3px;color:#1f1f1f;white-space:nowrap;transform:scaleX(1.0326);transform-origin:0 0;">8ba07dc...</div>
<div class="a" style="left:1495px;top:590.25px;width:55.6px;height:1px;background:#1F1F1F;"></div>
<div class="a" style="left:1576.43px;top:575.95px;font-size:14.3px;line-height:14.3px;color:#1f1f1f;white-space:nowrap;">137 B</div>
<div class="a" style="left:1626.08px;top:575.95px;font-size:14.3px;line-height:14.3px;color:#1f1f1f;white-space:nowrap;transform:scaleX(1.0123);transform-origin:0 0;">213...</div>
<div class="a" style="left:1227px;top:595.5px;width:672px;height:26.25px;background:#F7F9FC;"></div>
<svg class="a" style="left:1233px;top:602.00px" width="18" height="14" viewBox="0 0 18 14"><path d="M5 1.2 Q2.8 1.2 2.8 3.2 V5.5 Q2.8 7 1.2 7 Q2.8 7 2.8 8.5 V10.8 Q2.8 12.8 5 12.8 M13 1.2 Q15.2 1.2 15.2 3.2 V5.5 Q15.2 7 16.8 7 Q15.2 7 15.2 8.5 V10.8 Q15.2 12.8 13 12.8" fill="none" stroke="#E8710A" stroke-width="1.7"/><circle cx="9.6" cy="3.6" r="1.1" fill="#E8710A"/><path d="M9.6 6 V9 Q9.6 11 7.8 11.5" fill="none" stroke="#E8710A" stroke-width="1.6"/></svg><div class="a" style="left:1255.89px;top:602.20px;font-size:14.3px;line-height:14.3px;color:#1f1f1f;white-space:nowrap;transform:scaleX(1.0373);transform-origin:0 0;">settings.json</div>
<div class="a" style="left:1395.25px;top:602.20px;font-size:14.3px;line-height:14.3px;color:#1f1f1f;white-space:nowrap;transform:scaleX(1.0445);transform-origin:0 0;">200</div>
<div class="a" style="left:1445.31px;top:602.20px;font-size:14.3px;line-height:14.3px;color:#1f1f1f;white-space:nowrap;transform:scaleX(1.0541);transform-origin:0 0;">xhr</div>
<div class="a" style="left:1494.08px;top:602.20px;font-size:14.3px;line-height:14.3px;color:#1f1f1f;white-space:nowrap;transform:scaleX(0.9946);transform-origin:0 0;">uc.js?cbi...</div>
<div class="a" style="left:1495px;top:616.5px;width:53.4px;height:1px;background:#1F1F1F;"></div>
<div class="a" style="left:1576.82px;top:602.20px;font-size:14.3px;line-height:14.3px;color:#1f1f1f;white-space:nowrap;">936 B</div>
<div class="a" style="left:1626.11px;top:602.20px;font-size:14.3px;line-height:14.3px;color:#1f1f1f;white-space:nowrap;transform:scaleX(1.0129);transform-origin:0 0;">90 ...</div>
<div class="a" style="left:1389.9px;top:404px;width:1px;height:344.5px;background:#CFDCF3;"></div>
<div class="a" style="left:1438.8px;top:404px;width:1px;height:344.5px;background:#CFDCF3;"></div>
<div class="a" style="left:1489.0px;top:404px;width:1px;height:344.5px;background:#CFDCF3;"></div>
<div class="a" style="left:1570.5px;top:404px;width:1px;height:344.5px;background:#CFDCF3;"></div>
<div class="a" style="left:1620.0px;top:404px;width:1px;height:344.5px;background:#CFDCF3;"></div>
<div class="a" style="left:1669.9px;top:404px;width:1px;height:344.5px;background:#CFDCF3;"></div>
<div class="a" style="left:1793px;top:437px;width:2px;height:311.5px;background:#5A8DEB;"></div>
<div class="a" style="left:1813px;top:437px;width:1px;height:311.5px;background:#DCE6F8;"></div>
<div class="a" style="left:1884.5px;top:437px;width:2px;height:311.5px;background:#C5221F;"></div>
<div class="a" style="left:1789.8px;top:448.6px;width:4.7px;height:5px;background:#DCDCDC;"></div>
<div class="a" style="left:1795.5px;top:446.6px;width:6.0px;height:9px;background:#F2A900;"></div>
<div class="a" style="left:1801.5px;top:446.6px;width:6.3px;height:9px;background:#C98BF5;"></div>
<div class="a" style="left:1809px;top:443.1px;width:13px;height:16px;background:#2DA94F;border-radius:2px;"></div>
<div class="a" style="left:1822px;top:444.6px;width:2.3px;height:13px;background:#1A8CFF;border-radius:2px;"></div>
<div class="a" style="left:1809px;top:473.1px;width:5.4px;height:8.5px;background:#DCDCDC;"></div>
<div class="a" style="left:1815.4px;top:469.1px;width:4.3px;height:16.5px;background:#2DA94F;border-radius:2px;"></div>
<div class="a" style="left:1819.7px;top:471.35px;width:2.3px;height:12px;background:#1A8CFF;border-radius:2px;"></div>
<div class="a" style="left:1829px;top:500.6px;width:3.4px;height:6px;background:#DCDCDC;"></div>
<div class="a" style="left:1833px;top:495.35px;width:11.7px;height:16.5px;background:#2DA94F;border-radius:2px;"></div>
<div class="a" style="left:1844.7px;top:497.1px;width:2.3px;height:13px;background:#1A8CFF;border-radius:2px;"></div>
<div class="a" style="left:1844.4px;top:525.85px;width:1.6px;height:8px;background:#DCDCDC;"></div>
<div class="a" style="left:1847px;top:525.85px;width:1.5px;height:8px;background:#DCDCDC;"></div>
<div class="a" style="left:1850.4px;top:525.85px;width:1.9px;height:8px;background:#F2A900;"></div>
<div class="a" style="left:1852.3px;top:525.85px;width:2.3px;height:8px;background:#C98BF5;"></div>
<div class="a" style="left:1857px;top:522.85px;width:3px;height:14px;background:#1A8CFF;border-radius:2px;"></div>
<div class="a" style="left:1844.4px;top:552.1px;width:1.6px;height:8px;background:#DCDCDC;"></div>
<div class="a" style="left:1847px;top:552.1px;width:1.5px;height:8px;background:#DCDCDC;"></div>
<div class="a" style="left:1850.4px;top:552.1px;width:1.9px;height:8px;background:#F2A900;"></div>
<div class="a" style="left:1852.3px;top:552.1px;width:2.3px;height:8px;background:#C98BF5;"></div>
<div class="a" style="left:1857px;top:549.1px;width:3px;height:14px;background:#1A8CFF;border-radius:2px;"></div>
<div class="a" style="left:1858px;top:578.85px;width:2.8px;height:7px;background:#DCDCDC;"></div>
<div class="a" style="left:1863.3px;top:577.85px;width:5.1px;height:9px;background:#F2A900;"></div>
<div class="a" style="left:1868.4px;top:577.85px;width:4.4px;height:9px;background:#C98BF5;"></div>
<div class="a" style="left:1874px;top:574.35px;width:5.8px;height:16px;background:#2DA94F;border-radius:2px;"></div>
<div class="a" style="left:1879.8px;top:575.85px;width:2.2px;height:13px;background:#1A8CFF;border-radius:2px;"></div>
<div class="a" style="left:1889.8px;top:605.6px;width:2.2px;height:6px;background:#DCDCDC;"></div>
<div class="a" style="left:1894.4px;top:604.1px;width:3.4px;height:9px;background:#F2A900;"></div>
<div class="a" style="left:1227px;top:748px;width:692px;height:1px;background:#CFDCF3;"></div>
<div class="a" style="left:1238.85px;top:757.90px;font-size:14.3px;line-height:14.3px;color:#474747;white-space:nowrap;transform:scaleX(1.0452);transform-origin:0 0;">7 / 62 requests</div>
<div class="a" style="left:1349px;top:755px;width:1px;height:20px;background:#CFDCF3;"></div>
<div class="a" style="left:1361.06px;top:757.90px;font-size:14.3px;line-height:14.3px;color:#474747;white-space:nowrap;transform:scaleX(1.0338);transform-origin:0 0;">6.3 kB / 8.2 MB transferred</div>
<div class="a" style="left:1549px;top:755px;width:1px;height:20px;background:#CFDCF3;"></div>
<div class="a" style="left:1560.41px;top:757.90px;font-size:14.3px;line-height:14.3px;color:#474747;white-space:nowrap;transform:scaleX(1.0186);transform-origin:0 0;">11.9 kB / 9.7 MB resources</div>
<div class="a" style="left:1747px;top:755px;width:1px;height:20px;background:#CFDCF3;"></div>
<div class="a" style="left:1758.83px;top:757.90px;font-size:14.3px;line-height:14.3px;color:#474747;white-space:nowrap;transform:scaleX(0.9920);transform-origin:0 0;">Finish: 3.21 s</div>
<div class="a" style="left:1854px;top:755px;width:1px;height:20px;background:#CFDCF3;"></div>
<div class="a" style="left:1865.22px;top:757.90px;font-size:14.3px;line-height:14.3px;color:#0B57D0;white-space:nowrap;">DOMContentLoaded: 1.70 s</div>
<div class="a" style="left:1227px;top:781px;width:692px;height:1px;background:#CFDCF3;"></div>
<div class="a" style="left:1227px;top:782px;width:692px;height:33px;background:#EAEEF6;"></div>
<div class="a" style="left:1227px;top:815px;width:692px;height:1px;background:#CFDCF3;"></div>
<svg class="a" style="left:1241px;top:789px" width="12" height="20" viewBox="0 0 12 20"><circle cx="6" cy="3.5" r="1.8" fill="#474747"/><circle cx="6" cy="9.3" r="1.8" fill="#474747"/><circle cx="6" cy="15" r="1.8" fill="#474747"/></svg><div class="a" style="left:1273.47px;top:792.30px;font-size:14.3px;line-height:14.3px;color:#474747;white-space:nowrap;transform:scaleX(1.0250);transform-origin:0 0;">Console</div>
<div class="a" style="left:1351.73px;top:792.30px;font-size:14.3px;line-height:14.3px;color:#0B57D0;white-space:nowrap;transform:scaleX(1.0344);transform-origin:0 0;">What's New</div>
<svg class="a" style="left:1439px;top:791px" width="14" height="14" viewBox="0 0 14 14"><path d="M2 2 L12 12 M12 2 L2 12" stroke="#474747" stroke-width="1.6"/></svg><div class="a" style="left:1339.5px;top:813px;width:118px;height:3px;background:#0B57D0;border-radius:2px 2px 0 0;"></div>
<svg class="a" style="left:1891px;top:790px" width="17" height="17" viewBox="0 0 17 17"><path d="M2.5 2.5 L14.5 14.5 M14.5 2.5 L2.5 14.5" stroke="#474747" stroke-width="1.7"/></svg><div class="a" style="left:1245.25px;top:825.50px;font-size:14.3px;line-height:14.3px;color:#1F1F1F;white-space:nowrap;transform:scaleX(1.0634);transform-origin:0 0;">Highlights from the Chrome 120 update</div>
<div class="a" style="left:1227px;top:849px;width:672px;height:1px;background:#CFDCF3;"></div>
<div class="a" style="left:1899px;top:816px;width:20px;height:213px;background:#F1F1F1;"></div>
<div class="a" style="left:1901px;top:837px;width:17px;height:68px;background:#C1C1C1;"></div>
<svg class="a" style="left:1903px;top:824px" width="12" height="8" viewBox="0 0 12 8"><path d="M1 7 L6 2 L11 7 Z" fill="#A3A3A3"/></svg><svg class="a" style="left:1903px;top:1016px" width="12" height="8" viewBox="0 0 12 8"><path d="M1 1 L6 6 L11 1 Z" fill="#505050"/></svg><div class="a" style="left:1250.10px;top:890.87px;font-size:20px;line-height:20px;color:#0B57D0;white-space:nowrap;font-weight:bold;transform:scaleX(1.0168);transform-origin:0 0;">Third-party cookie phaseout</div>
<div class="a" style="left:1249.91px;top:937.93px;font-size:17.8px;line-height:17.8px;color:#1F1F1F;white-space:nowrap;transform:scaleX(0.9652);transform-origin:0 0;">The Issues panel now warns you about the</div>
<div class="a" style="left:1249.54px;top:962.63px;font-size:17.8px;line-height:17.8px;color:#1F1F1F;white-space:nowrap;">cookies that will be affected by the upcoming</div>
<div class="a" style="left:1249.55px;top:987.43px;font-size:17.8px;line-height:17.8px;color:#1F1F1F;white-space:nowrap;">deprecation and phaseout of third-party cookies.</div>
<svg class="a" style="left:1683px;top:887px" width="216" height="142" viewBox="0 0 216 142"><rect width="216" height="142" fill="#2B7BF3"/><g stroke="#5C9BF7" stroke-width="1" fill="none" opacity="0.8"><path d="M0 20 H216 M0 36 H216 M0 74 H216 M0 110 H216 M25 0 V142 M40 0 V142 M80 0 V142 M140 0 V142 M180 0 V142"/><path d="M0 0 L160 142 M0 142 L160 0"/><circle cx="80" cy="74" r="80"/></g><g stroke="#A9CBFF" stroke-width="3.5" fill="none"><circle cx="80" cy="74" r="40"/><circle cx="80" cy="74" r="55"/><path d="M101 22 H186"/><path d="M0 48 L25 84"/><path d="M120 142 L145 104"/><path d="M180 0 A123 123 0 0 1 190 120"/></g><rect x="127" y="103" width="66" height="45" rx="9" fill="#E01E1E"/><path d="M150 112 L172 123 L150 134 Z" fill="#fff"/></svg>


<!-- annotation boxes -->
<div class="redbox" style="left:1554px;top:89px;width:108px;height:70px"></div>
<div class="redbox" style="left:1345px;top:231px;width:94px;height:50px"></div>
</body></html>
